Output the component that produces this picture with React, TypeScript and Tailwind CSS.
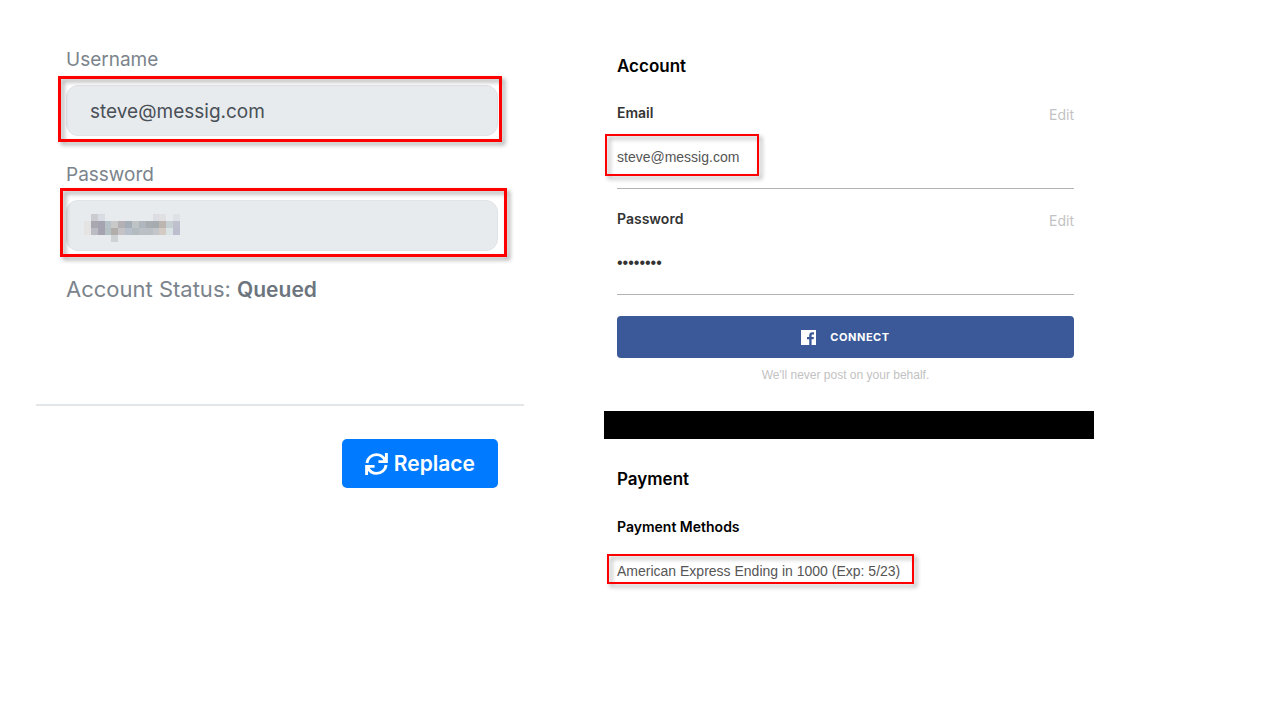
const inputClass =
  "block h-[51px] w-full rounded-xl border border-[#e0e3e7] bg-[#e8ebee] px-[23px] pt-0.5 text-[#495057] outline-none";

const frameClass =
  "pointer-events-none absolute border-[#ff0000] drop-shadow-[3px_3px_2px_rgba(0,0,0,0.35)]";

const valueClass = "relative mt-6 w-fit font-['Liberation_Sans',sans-serif] leading-5";

// Censored password: cell is [column, row, colour]
const mosaic: [number, number, string][] = [
  [1, 0, "#cccbd0"], [2, 0, "#dadce3"], [10, 0, "#dcdee3"], [11, 0, "#e0dfe1"], [13, 0, "#dee1e6"],
  [0, 1, "#e5e4e4"], [1, 1, "#a9a8b0"], [2, 1, "#a5a3b0"], [3, 1, "#b6c1c8"], [4, 1, "#c9c9ca"],
  [5, 1, "#b4b0b4"], [6, 1, "#a5adb7"], [7, 1, "#bec3c6"], [8, 1, "#b0b6bd"], [9, 1, "#a7adb0"],
  [10, 1, "#a5abaf"], [11, 1, "#bdb6b0"], [12, 1, "#c6d0d2"], [13, 1, "#bfc0ce"],
  [0, 2, "#e6e4e3"], [1, 2, "#bbbcc3"], [2, 2, "#a6a3b0"], [3, 2, "#b4c0c4"], [4, 2, "#b2aeac"],
  [5, 2, "#c4c2c4"], [6, 2, "#b7bfcb"], [7, 2, "#b3bbc0"], [8, 2, "#bbc0c7"], [9, 2, "#b9bfc4"],
  [10, 2, "#c2c5c9"], [11, 2, "#d3cac4"], [12, 2, "#d9e3e4"], [13, 2, "#bdbdcd"],
  [4, 3, "#cfd2d5"],
];

function Mosaic() {
  return (
    <svg
      aria-hidden="true"
      viewBox="0 0 14 4"
      preserveAspectRatio="none"
      shapeRendering="crispEdges"
      className="pointer-events-none absolute top-[14px] left-[18px] h-7 w-24"
    >
      {mosaic.map(([x, y, fill]) => (
        <rect key={`${x}-${y}`} x={x} y={y} width="1" height="1" fill={fill} />
      ))}
    </svg>
  );
}

function RefreshIcon() {
  const arrow = "M1.9 10A9.6 9.4 0 0 1 11.5 1.6A9.6 9.4 0 0 1 20 7.2M21.4 0V8.6H13.4";
  return (
    <svg
      viewBox="0 0 23 22"
      className="h-[22px] w-[23px]"
      fill="none"
      stroke="currentColor"
      strokeWidth="2.9"
      aria-hidden="true"
    >
      <path d={arrow} />
      <path d={arrow} transform="rotate(180 11.5 11)" />
    </svg>
  );
}

function FacebookIcon() {
  return (
    <svg viewBox="0 0 15 15" className="size-[15px]" aria-hidden="true">
      <path
        fill="currentColor"
        d="M0 0h15v15h-4.4V9.2h2l.3-2.3h-2.3V5.5c0-.7.3-1.1 1.1-1.1h1.3V2.3a16 16 0 0 0-1.8-.1c-1.8 0-3 1.1-3 3.1v1.6H6v2.3h2.2V15H0z"
      />
    </svg>
  );
}

function Credentials() {
  return (
    <section className="pt-12 text-[19px] leading-6 text-[#7b848c]">
      <form className="pr-[26px] pl-[30px]" onSubmit={(e) => e.preventDefault()}>
        <label htmlFor="username" className="block">Username</label>
        <div className="relative mt-[13px]">
          <input id="username" readOnly defaultValue="steve@messig.com" className={inputClass} />
          <div className={`${frameClass} -top-[9px] -right-1 -bottom-[6px] -left-2 border-3`} />
        </div>
        <label htmlFor="password" className="mt-[27px] block">Password</label>
        <div className="relative mt-[13px]">
          <input id="password" readOnly className={inputClass} />
          <Mosaic />
          <div className={`${frameClass} -top-3 -right-[9px] -bottom-[6px] -left-[6px] border-3`} />
        </div>
        <p className="mt-[26px] text-[22px] leading-6">
          Account Status: <strong className="text-[21px] font-semibold text-[#6c757d]">Queued</strong>
        </p>
      </form>
      <div className="mt-[102px] flex justify-end border-t-2 border-[#e4e7ea] pt-[33px] pr-[26px]">
        <button
          type="button"
          className="flex h-[49px] items-center gap-[6px] rounded-[5px] bg-[#007bff] px-[23px] text-[21px] font-semibold text-white"
        >
          <RefreshIcon />
          Replace
        </button>
      </div>
    </section>
  );
}

function SettingRow({ title, email, dots }: { title: string; email?: string; dots?: string }) {
  return (
    <div className="border-b border-[#b3b3b3] pb-[21px]">
      <div className="flex h-5 items-start justify-between">
        <h3 className="text-sm leading-5 font-semibold text-[#333]">{title}</h3>
        <button type="button" className="text-sm leading-6 text-[#c2c2c2]">Edit</button>
      </div>
      {email && (
        <p className={`${valueClass} text-sm text-[#555]`}>
          {email}
          <span className={`${frameClass} -top-[13px] -right-5 -bottom-[9px] -left-3 border-2`} />
        </p>
      )}
      {dots && <p className={`${valueClass} text-base text-[#333]`}>{dots}</p>}
    </div>
  );
}

function Settings() {
  return (
    <div className="pt-[54px]">
      <section className="pr-5 pb-7 pl-[13px]">
        <h2 className="text-[17px] leading-6 font-semibold text-black">Account</h2>
        <div className="mt-[25px] flex flex-col gap-5">
          <SettingRow title="Email" email="steve@messig.com" />
          <SettingRow title="Password" dots="••••••••" />
        </div>
        <button
          type="button"
          className="mt-[21px] flex h-[42px] w-full items-center justify-center gap-[14px] rounded-sm bg-[#3b5998] text-[11px] font-bold tracking-wider text-white"
        >
          <FacebookIcon />
          CONNECT
        </button>
        <p className="mt-[9px] text-center font-['Liberation_Sans',sans-serif] text-xs leading-4 text-[#c2c2c2]">
          We'll never post on your behalf.
        </p>
      </section>
      <div className="h-7 bg-black" />
      <section className="pt-7 pr-5 pl-[13px]">
        <h2 className="text-[17px] leading-6 font-semibold text-black">Payment</h2>
        <h3 className="mt-[26px] text-sm leading-5 font-semibold text-black">Payment Methods</h3>
        <p className={`${valueClass} text-sm text-[#555]`}>
          American Express Ending in 1000 (Exp: 5/23)
          <span className={`${frameClass} -top-[7px] -right-[14px] -bottom-[3px] -left-[10px] border-2`} />
        </p>
      </section>
    </div>
  );
}

export default function App() {
  return (
    <main className="grid min-h-screen grid-cols-[488fr_490fr] gap-20 bg-white pr-[186px] pl-9 font-['Inter',sans-serif]">
      <Credentials />
      <Settings />
    </main>
  );
}
